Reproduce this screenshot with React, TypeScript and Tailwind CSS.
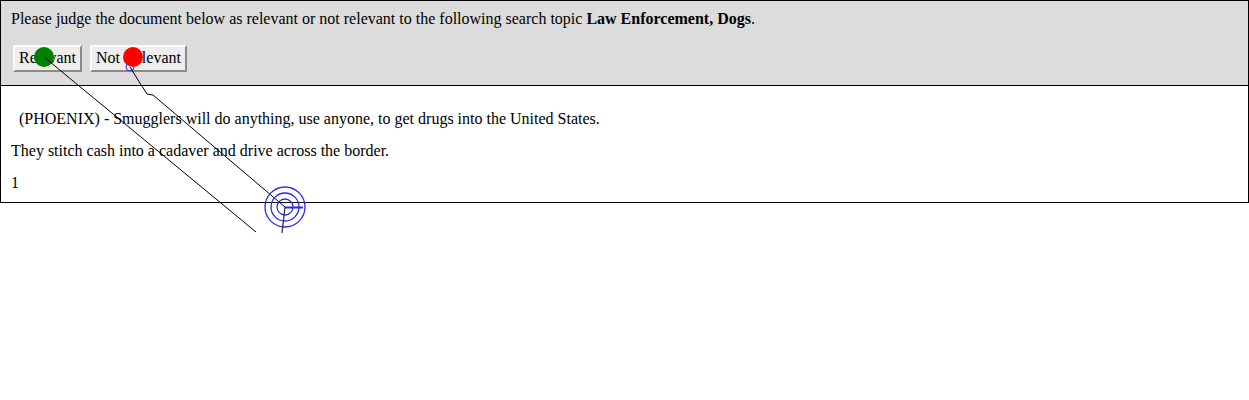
import React from 'react';

const App: React.FC = () => {
  return (
    <div className="relative min-h-[400px] bg-white text-black text-[16px] leading-[18px] font-['Liberation_Serif',serif]">
      <div className="bg-[#dcdcdc] border border-black pl-[10px] pt-[9px] pb-[13px]">
        <p>
          Please judge the document below as relevant or not relevant to the following search topic{' '}
          <b>Law Enforcement, Dogs</b>.
        </p>
        <div className="flex gap-[8px] mt-[17px] ml-[2px]">
          <button className="w-[69px] h-[27px] pb-[2px] bg-[#efedeb] border-2 border-t-[#fafafa] border-l-[#fafafa] border-b-[#8a8a8a] border-r-[#8a8a8a] text-black">
            Relevant
          </button>
          <button className="w-[97px] h-[27px] pb-[2px] bg-[#efedeb] border-2 border-t-[#fafafa] border-l-[#fafafa] border-b-[#8a8a8a] border-r-[#8a8a8a] text-black">
            Not Relevant
          </button>
        </div>
      </div>
      <div className="border border-t-0 border-black pl-[10px] pt-[24px] pb-[10px] flex flex-col gap-[14px]">
        <p className="pl-[8px]">(PHOENIX) - Smugglers will do anything, use anyone, to get drugs into the United States.</p>
        <p>They stitch cash into a cadaver and drive across the border.</p>
        <p>1</p>
      </div>

      {/* mouse trail overlay */}
      <svg className="absolute top-0 left-0 pointer-events-none" width="1249" height="400">
        <circle cx="44" cy="57" r="10" fill="#008000" />
        <circle cx="130" cy="67" r="4" fill="none" stroke="#2a2ae0" strokeWidth="1" />
        <circle cx="133" cy="57" r="10" fill="#ff0000" />
        <line x1="44" y1="57" x2="256" y2="232" stroke="#000" strokeWidth="1" />
        <polyline points="130,67 138,80 147,94 153,95 285,207" fill="none" stroke="#000" strokeWidth="1" />
        <circle cx="285" cy="207" r="20" fill="none" stroke="#2a2ae0" strokeWidth="1.3" />
        <circle cx="285" cy="207" r="14" fill="none" stroke="#2a2ae0" strokeWidth="1.3" />
        <circle cx="285" cy="207" r="8" fill="none" stroke="#2a2ae0" strokeWidth="1.3" />
        <line x1="285" y1="207.5" x2="303" y2="207.5" stroke="#2a2ae0" strokeWidth="2" />
        <line x1="285" y1="207" x2="282" y2="233" stroke="#333" strokeWidth="1.3" />
      </svg>
    </div>
  );
};

export default App;
